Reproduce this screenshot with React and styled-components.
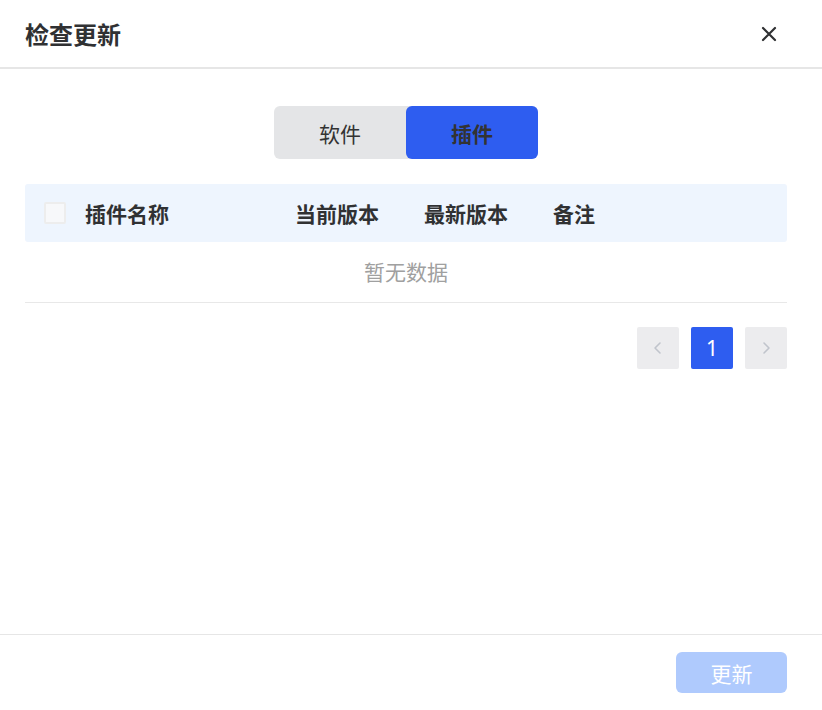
import React, { useState } from 'react'
import styled, { createGlobalStyle } from 'styled-components'

const GlobalStyle = createGlobalStyle`
  html, body {
    margin: 0;
    padding: 0;
    background: #fff;
  }
  body {
    font-family: "Noto Sans CJK SC", "Noto Sans", sans-serif;
    color: #333;
  }
  * { box-sizing: border-box; }
`

const Dialog = styled.div`
  width: 822px;
  height: 710px;
  display: flex;
  flex-direction: column;
  background: #fff;
`

const Header = styled.div`
  height: 69px;
  flex-shrink: 0;
  display: flex;
  align-items: center;
  justify-content: space-between;
  padding: 0 44px 0 25px;
  border-bottom: 2px solid #e6e6e6;
`

const Title = styled.h1`
  margin: 0;
  font-size: 24px;
  font-weight: 700;
  color: #303133;
  line-height: 1;
`

const CloseButton = styled.button`
  width: 18px;
  height: 18px;
  padding: 0;
  border: 0;
  background: none;
  cursor: pointer;
  display: flex;
  align-items: center;
  justify-content: center;
`

const Body = styled.div`
  flex: 1;
  padding: 37px 35px 0 25px;
  display: flex;
  flex-direction: column;
`

const Segmented = styled.div`
  align-self: center;
  display: flex;
  height: 53px;
  border-radius: 6px;
  background: #e4e5e7;
`

const Segment = styled.button`
  width: 132px;
  border: 0;
  border-radius: 6px;
  font-family: inherit;
  font-size: 21px;
  font-weight: ${p => (p.active ? 700 : 400)};
  color: #333;
  background: ${p => (p.active ? '#2e5df0' : 'transparent')};
  cursor: pointer;
`

const Table = styled.div`
  margin-top: 25px;
  border-bottom: 1px solid #e8e8e8;
`

const HeadRow = styled.div`
  height: 58px;
  display: flex;
  align-items: center;
  background: #eef5fe;
  border-radius: 3px;
  padding-left: 19px;
`

const Checkbox = styled.span`
  width: 22px;
  height: 22px;
  border: 2px solid #ededed;
  background: #f7f8fa;
  border-radius: 2px;
  margin-right: 19px;
`

const HeadCell = styled.div`
  width: ${p => p.w}px;
  font-size: 21px;
  font-weight: 700;
  color: #303133;
`

const Empty = styled.div`
  height: 60px;
  display: flex;
  align-items: center;
  justify-content: center;
  font-size: 21px;
  color: #a0a0a0;
  padding-bottom: 2px;
`

const Pager = styled.div`
  margin-top: 24px;
  display: flex;
  justify-content: flex-end;
  gap: 12px;
`

const PageButton = styled.button`
  width: 42px;
  height: 42px;
  border: 0;
  border-radius: 2px;
  padding: 0;
  display: flex;
  align-items: center;
  justify-content: center;
  font-family: "Noto Sans", sans-serif;
  font-size: 21px;
  color: ${p => (p.active ? '#fff' : '#c0c4cc')};
  background: ${p => (p.active ? '#2e5df0' : '#ececee')};
`

const Footer = styled.div`
  height: 76px;
  flex-shrink: 0;
  border-top: 1px solid #e6e6e6;
  display: flex;
  align-items: flex-start;
  justify-content: flex-end;
  padding: 17px 35px 0 0;
`

const UpdateButton = styled.button`
  width: 111px;
  height: 41px;
  border: 0;
  border-radius: 6px;
  background: #afcafd;
  color: #fff;
  font-family: inherit;
  font-size: 21px;
  cursor: not-allowed;
`

const Chevron = ({ dir }) => (
  <svg width="14" height="14" viewBox="0 0 14 14" fill="none">
    <path
      d={dir === 'left' ? 'M9 2 L4 7 L9 12' : 'M5 2 L10 7 L5 12'}
      stroke="#c0c4cc"
      strokeWidth="1.6"
      strokeLinecap="round"
      strokeLinejoin="round"
    />
  </svg>
)

const columns = [
  { label: '插件名称', w: 210 },
  { label: '当前版本', w: 129 },
  { label: '最新版本', w: 129 },
  { label: '备注', w: 100 },
]

export default function App() {
  const [tab, setTab] = useState('plugin')
  return (
    <>
      <GlobalStyle />
      <Dialog>
        <Header>
          <Title>检查更新</Title>
          <CloseButton aria-label="close">
            <svg width="16" height="16" viewBox="0 0 16 16">
              <path d="M2 2 L14 14 M14 2 L2 14" stroke="#303133" strokeWidth="2.2" strokeLinecap="round" />
            </svg>
          </CloseButton>
        </Header>
        <Body>
          <Segmented>
            <Segment active={tab === 'software'} onClick={() => setTab('software')}>软件</Segment>
            <Segment active={tab === 'plugin'} onClick={() => setTab('plugin')}>插件</Segment>
          </Segmented>
          <Table>
            <HeadRow>
              <Checkbox />
              {columns.map(c => (
                <HeadCell key={c.label} w={c.w}>{c.label}</HeadCell>
              ))}
            </HeadRow>
            <Empty>暂无数据</Empty>
          </Table>
          <Pager>
            <PageButton><Chevron dir="left" /></PageButton>
            <PageButton active>1</PageButton>
            <PageButton><Chevron dir="right" /></PageButton>
          </Pager>
        </Body>
        <Footer>
          <UpdateButton disabled>更新</UpdateButton>
        </Footer>
      </Dialog>
    </>
  )
}
